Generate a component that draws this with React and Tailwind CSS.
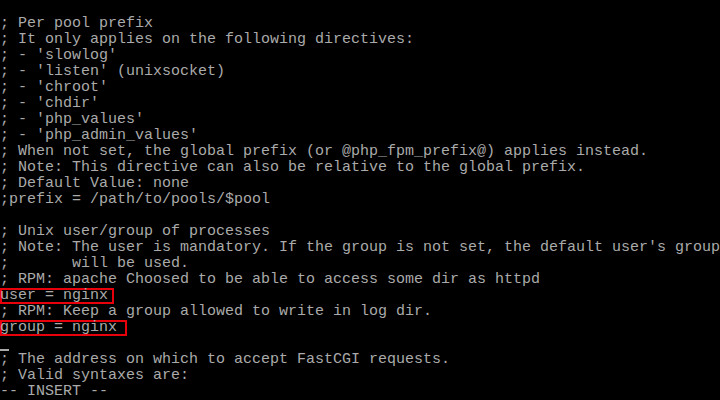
const lines = [
  "",
  "; Per pool prefix",
  "; It only applies on the following directives:",
  "; - 'slowlog'",
  "; - 'listen' (unixsocket)",
  "; - 'chroot'",
  "; - 'chdir'",
  "; - 'php_values'",
  "; - 'php_admin_values'",
  "; When not set, the global prefix (or @php_fpm_prefix@) applies instead.",
  "; Note: This directive can also be relative to the global prefix.",
  "; Default Value: none",
  ";prefix = /path/to/pools/$pool",
  "",
  "; Unix user/group of processes",
  "; Note: The user is mandatory. If the group is not set, the default user's group",
  ";       will be used.",
  "; RPM: apache Choosed to be able to access some dir as httpd",
  { text: "user = nginx", box: "w-[114px]" },
  "; RPM: Keep a group allowed to write in log dir.",
  { text: "group = nginx", box: "w-[127px]" },
  { cursor: true },
  "; The address on which to accept FastCGI requests.",
  "; Valid syntaxes are:",
  "-- INSERT --",
];

export default function App() {
  return (
    <div className="w-[720px] h-[400px] overflow-hidden bg-black text-[#aaaaaa] font-['Liberation_Mono',monospace] text-[15px] leading-[16px]">
      {lines.map((line, i) => {
        if (typeof line === "string") {
          return (
            <div key={i} className="h-4 whitespace-pre">
              {line}
            </div>
          );
        }
        if (line.cursor) {
          return (
            <div key={i} className="h-4 flex items-end pb-[1px]">
              <div className="w-[9px] h-[2px] bg-[#aaaaaa]" />
            </div>
          );
        }
        return (
          <div key={i} className="h-4 whitespace-pre">
            <span className={`inline-block h-4 align-top shadow-[inset_0_0_0_2px_#e8000b] ${line.box}`}>
              {line.text}
            </span>
          </div>
        );
      })}
    </div>
  );
}
